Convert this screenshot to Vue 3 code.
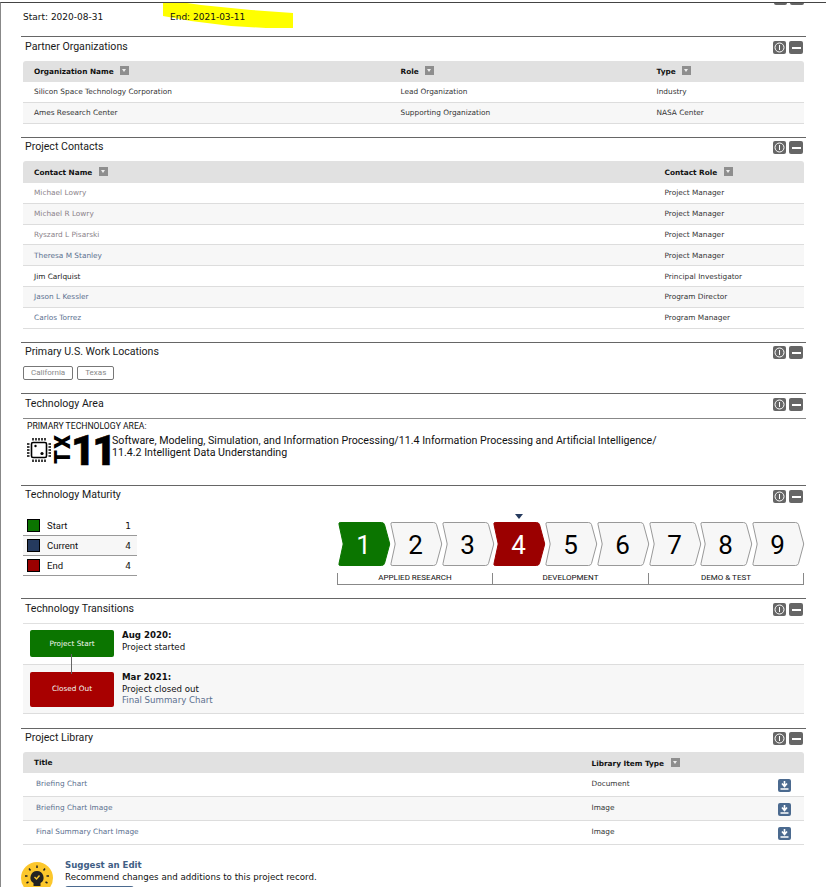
<script setup>
const partners = [
  ['Silicon Space Technology Corporation', 'Lead Organization', 'Industry'],
  ['Ames Research Center', 'Supporting Organization', 'NASA Center']
]
const contacts = [
  ['Michael Lowry', 'Project Manager', 'muted'],
  ['Michael R Lowry', 'Project Manager', 'muted'],
  ['Ryszard L Pisarski', 'Project Manager', 'muted'],
  ['Theresa M Stanley', 'Project Manager', 'link'],
  ['Jim Carlquist', 'Principal Investigator', 'plain'],
  ['Jason L Kessler', 'Program Director', 'link'],
  ['Carlos Torrez', 'Program Manager', 'link']
]
const legend = [
  ['Start', 1, '#0b7500'],
  ['Current', 4, '#253a5e'],
  ['End', 4, '#9b0000']
]
const steps = [1, 2, 3, 4, 5, 6, 7, 8, 9]
const library = [
  ['Briefing Chart', 'Document'],
  ['Briefing Chart Image', 'Image'],
  ['Final Summary Chart Image', 'Image']
]
</script>

<template>
  <div class="page">
    <svg class="marker" width="135" height="30" viewBox="0 0 135 30">
      <path d="M2 0H12L40 4 90 9 132 12V27H105L70 25 30 20 2 15Z" fill="#ffff00" />
    </svg>

    <div class="stub"><span class="btns"><i class="btn"></i><i class="btn"></i></span></div>
    <div class="dates"><span class="d1">Start: 2020-08-31</span><span>End: 2021-03-11</span></div>

    <section class="sec s1">
      <header class="sec-head">
        <h2>Partner Organizations</h2>
        <span class="btns">
          <i class="btn"><svg width="11" height="11" viewBox="0 0 11 11"><circle cx="5.5" cy="5.5" r="4.5" fill="none" stroke="#fff" /><path d="M5.5 3v5" stroke="#fff" /></svg></i>
          <i class="btn"><b class="dash"></b></i>
        </span>
      </header>
      <div class="thead cols-a">
        <span>Organization Name <i class="sort"></i></span>
        <span>Role <i class="sort"></i></span>
        <span>Type <i class="sort"></i></span>
      </div>
      <div v-for="(r, i) in partners" :key="r[0]" class="trow cols-a" :class="{ alt: i % 2 }">
        <span v-for="c in r" :key="c">{{ c }}</span>
      </div>
    </section>

    <section class="sec s2">
      <header class="sec-head tight">
        <h2>Project Contacts</h2>
        <span class="btns">
          <i class="btn"><svg width="11" height="11" viewBox="0 0 11 11"><circle cx="5.5" cy="5.5" r="4.5" fill="none" stroke="#fff" /><path d="M5.5 3v5" stroke="#fff" /></svg></i>
          <i class="btn"><b class="dash"></b></i>
        </span>
      </header>
      <div class="thead thead-b cols-b">
        <span>Contact Name <i class="sort"></i></span>
        <span>Contact Role <i class="sort"></i></span>
      </div>
      <div v-for="(r, i) in contacts" :key="r[0]" class="trow contact-row cols-b" :class="{ alt: i % 2 }">
        <span :class="r[2]">{{ r[0] }}</span><span>{{ r[1] }}</span>
      </div>
    </section>

    <section class="sec s3">
      <header class="sec-head tight">
        <h2>Primary U.S. Work Locations</h2>
        <span class="btns">
          <i class="btn"><svg width="11" height="11" viewBox="0 0 11 11"><circle cx="5.5" cy="5.5" r="4.5" fill="none" stroke="#fff" /><path d="M5.5 3v5" stroke="#fff" /></svg></i>
          <i class="btn"><b class="dash"></b></i>
        </span>
      </header>
      <div class="tags"><span class="tag">California</span><span class="tag">Texas</span></div>
    </section>

    <section class="sec s4">
      <header class="sec-head">
        <h2>Technology Area</h2>
        <span class="btns">
          <i class="btn"><svg width="11" height="11" viewBox="0 0 11 11"><circle cx="5.5" cy="5.5" r="4.5" fill="none" stroke="#fff" /><path d="M5.5 3v5" stroke="#fff" /></svg></i>
          <i class="btn"><b class="dash"></b></i>
        </span>
      </header>
      <div class="area">
        <div class="area-label">PRIMARY TECHNOLOGY AREA:</div>
        <div class="area-body">
          <svg class="chip" width="24" height="24" viewBox="0 0 24 24">
            <rect x="4.5" y="4.5" width="15" height="15" rx="1.5" fill="none" stroke="#000" stroke-width="1.6" />
            <path d="M6 0v2.5M9 0v2.5M12 0v2.5M15 0v2.5M18 0v2.5M6 21.5V24M9 21.5V24M12 21.5V24M15 21.5V24M18 21.5V24M0 6h2.5M0 9h2.5M0 12h2.5M0 15h2.5M0 18h2.5M21.5 6H24M21.5 9H24M21.5 12H24M21.5 15H24M21.5 18H24" stroke="#000" stroke-width="1.5" />
            <circle cx="8.5" cy="8" r="1.2" /><circle cx="15" cy="15.5" r="1.6" />
          </svg>
          <span class="tx">TX</span>
          <span class="eleven">11</span>
          <p class="area-text">Software, Modeling, Simulation, and Information Processing/11.4 Information Processing and Artificial Intelligence/<br />11.4.2 Intelligent Data Understanding</p>
        </div>
      </div>
    </section>

    <section class="sec s5">
      <header class="sec-head">
        <h2>Technology Maturity</h2>
        <span class="btns">
          <i class="btn"><svg width="11" height="11" viewBox="0 0 11 11"><circle cx="5.5" cy="5.5" r="4.5" fill="none" stroke="#fff" /><path d="M5.5 3v5" stroke="#fff" /></svg></i>
          <i class="btn"><b class="dash"></b></i>
        </span>
      </header>
      <div class="maturity">
        <div class="legend">
          <div v-for="(l, i) in legend" :key="l[0]" class="leg-row" :class="{ alt: i === 1 }">
            <i class="swatch" :style="{ background: l[2] }"></i>
            <span class="leg-name">{{ l[0] }}</span>
            <span class="leg-val">{{ l[1] }}</span>
          </div>
        </div>
        <div class="scale">
          <div class="steps">
            <svg v-for="n in steps" :key="n" class="step" width="52" height="44" viewBox="0 0 52 44">
              <path
                d="M2.2 .5H43.5Q45.8 .5 46.5 2.5L51.5 21Q51.8 22 51.5 23L46.5 41.5Q45.8 43.5 43.5 43.5H2.2Q.4 43.5 1 41.5L5 23Q5.3 22 5 21L1 2.5Q.4 .5 2.2 .5Z"
                :fill="n === 1 ? '#0b7500' : n === 4 ? '#9b0000' : '#f7f7f7'"
                :stroke="n === 1 ? '#0b7500' : n === 4 ? '#9b0000' : '#999'"
              />
              <text x="25.5" y="31.5" text-anchor="middle" class="step-num" :fill="n === 1 || n === 4 ? '#fff' : '#000'">{{ n }}</text>
            </svg>
            <i class="caret"></i>
          </div>
          <div class="bracket">
            <span>APPLIED RESEARCH</span><span>DEVELOPMENT</span><span>DEMO &amp; TEST</span>
          </div>
        </div>
      </div>
    </section>

    <section class="sec s6">
      <header class="sec-head">
        <h2>Technology Transitions</h2>
        <span class="btns">
          <i class="btn"><svg width="11" height="11" viewBox="0 0 11 11"><circle cx="5.5" cy="5.5" r="4.5" fill="none" stroke="#fff" /><path d="M5.5 3v5" stroke="#fff" /></svg></i>
          <i class="btn"><b class="dash"></b></i>
        </span>
      </header>
      <div class="trans">
        <i class="connector"></i>
        <div class="t-row t-first">
          <div class="t-box green">Project Start</div>
          <div class="t-text"><strong>Aug 2020:</strong><br />Project started</div>
        </div>
        <div class="t-row t-second">
          <div class="t-box red">Closed Out</div>
          <div class="t-text"><strong>Mar 2021:</strong><br />Project closed out<br /><span class="link">Final Summary Chart</span></div>
        </div>
      </div>
    </section>

    <section class="sec s7">
      <header class="sec-head tight">
        <h2>Project Library</h2>
        <span class="btns">
          <i class="btn"><svg width="11" height="11" viewBox="0 0 11 11"><circle cx="5.5" cy="5.5" r="4.5" fill="none" stroke="#fff" /><path d="M5.5 3v5" stroke="#fff" /></svg></i>
          <i class="btn"><b class="dash"></b></i>
        </span>
      </header>
      <div class="thead cols-c">
        <span>Title</span>
        <span>Library Item Type <i class="sort"></i></span>
        <span></span>
      </div>
      <div v-for="(r, i) in library" :key="r[0]" class="trow lib-row cols-c" :class="{ alt: i % 2 }">
        <span class="link lib-title">{{ r[0] }}</span><span>{{ r[1] }}</span>
        <i class="dl">
          <svg width="13" height="13" viewBox="0 0 13 13"><path d="M6.5 2v5M4 4.5l2.5 3 2.5-3M2.5 10h8" fill="none" stroke="#fff" stroke-width="1.6" /></svg>
        </i>
      </div>
    </section>

    <div class="suggest">
      <svg class="bulb" width="32" height="32" viewBox="0 0 32 32">
        <circle cx="16" cy="16" r="16" fill="#fcc72c" />
        <path d="M16 9a6.5 6.5 0 0 0-3.5 12v3h7v-3A6.5 6.5 0 0 0 16 9Z" fill="#222" />
        <path d="M13.5 15l2 2 3-3.5" fill="none" stroke="#fcc72c" stroke-width="1.4" />
        <path d="M16 3.500v2.500M8 6.500l1.500 2M24 6.500l-1.500 2M4 14h2.500M25.500 14H28M5.500 21l2-1M26.500 21l-2-1" stroke="#222" stroke-width="1.5" />
      </svg>
      <div>
        <div class="sg-title">Suggest an Edit</div>
        <div class="sg-text">Recommend changes and additions to this project record.</div>
        <div class="sg-btn"></div>
      </div>
    </div>
  </div>
</template>

<style>
html, body { margin: 0; background: #fff; }
</style>

<style scoped>
.page {
  position: relative;
  height: 885px;
  margin-top: 2px;
  border-top: 1px solid #444;
  border-left: 1px solid #888;
  overflow: hidden;
  box-sizing: border-box;
  font-family: "DejaVu Sans", sans-serif;
  font-size: 7.35px;
  color: #333;
}
.marker { position: absolute; left: 160px; top: -2px; }
.stub { height: 2px; overflow: hidden; width: 803px; position: relative; }
.stub .btns { position: absolute; right: 0; bottom: 0; margin: 0; }
.dates {
  position: relative;
  height: 31px;
  padding: 7px 0 0 22px;
  box-sizing: border-box;
  font-size: 9px;
  color: #111;
  display: flex;
}
.d1 { width: 147px; }
.sec { width: 785px; margin-left: 20px; border-top: 1px solid #666; box-sizing: border-box; }
.s1 { height: 101px; }
.s2 { height: 205px; }
.s3 { height: 51px; }
.s4 { height: 92px; }
.s5 { height: 113px; }
.s6 { height: 130px; }
.s7 { height: 125px; }
.sec-head { height: 24px; display: flex; justify-content: space-between; align-items: flex-start; padding: 0 3px 0 4px; }
.sec-head.tight { height: 23px; }
.sec-head.tight .btns { margin-top: 3px; }
h2 { margin: 2px 0 0; font: 400 10.6px/14px Roboto, sans-serif; color: #1a1a1a; }
.s1 h2, .s4 h2, .s6 h2 { margin-top: 3px; }
.btns { display: flex; gap: 3px; margin-top: 4px; }
.btn { width: 13px; height: 13px; border-radius: 2px; background: #666; display: flex; align-items: center; justify-content: center; }
.btn + .btn { width: 14px; }
.dash { width: 9px; height: 2px; background: #fff; display: block; }
.thead, .trow { margin-left: 2px; width: 781px; display: grid; box-sizing: border-box; align-items: center; }
.thead { height: 21px; background: #e1e1e1; border-radius: 3px 3px 0 0; font-weight: 700; color: #111; }
.thead-b { height: 22px; }
.s1 .thead, .s2 .thead, .s1 .trow { padding-bottom: 1px; }
.trow { height: 21px; border-bottom: 1px solid #ddd; background: #fff; }
.contact-row { height: 20.8px; }
.trow.alt { background: #f7f7f7; }
.cols-a { grid-template-columns: 366.5px 256px 1fr; padding-left: 11px; }
.cols-b { grid-template-columns: 630.5px 1fr; padding-left: 11px; }
.cols-c { grid-template-columns: 557.5px 1fr 34px; padding-left: 11px; }
.sort { display: inline-block; width: 9px; height: 9px; margin-left: 4px; background: #8e8e8e; vertical-align: -1.5px; position: relative; }
.sort::after { content: ""; position: absolute; left: 2px; top: 3px; border: 2.5px solid transparent; border-top: 3px solid #eee; border-bottom: 0; }
.muted { color: #8a7f88; }
.link { color: #5b708f; }
.plain { color: #222; }
.tags { display: flex; gap: 4px; margin-left: 2px; }
.tag { height: 12px; padding: 0 7px; border: 1px solid #777; border-radius: 2px; font: 8px/12px Roboto, sans-serif; color: #888; }
.area { margin-left: 2px; border-top: 1px solid #888; padding: 1px 0 0 4px; }
.area-label { font: 8.65px/12px Roboto, sans-serif; color: #111; }
.area-body { display: flex; align-items: flex-start; margin-top: 2px; }
.chip { flex: none; margin-top: 4px; margin-right: 4px; }
.tx { flex: none; width: 16px; height: 30px; writing-mode: vertical-rl; transform: rotate(180deg); display: flex; align-items: center; justify-content: center; font: 900 22px/16px Roboto, sans-serif; color: #000; white-space: nowrap; letter-spacing: 1px; }
.eleven { flex: none; width: 39px; margin-top: 1px; font: 900 42px/32px Roboto, sans-serif; letter-spacing: -3px; color: #000; -webkit-text-stroke: .6px #000; }
.area-text { margin: 1px 0 0 2px; font: 400 10.65px/12px Roboto, sans-serif; color: #111; white-space: nowrap; }
.maturity { display: flex; }
.legend { width: 114px; margin-left: 2px; margin-top: 6px; }
.leg-row { height: 20px; border-bottom: 1px solid #999; box-sizing: border-box; display: flex; align-items: center; padding: 0 4px; font: 9.5px Roboto, sans-serif; color: #111; }
.leg-row.alt { background: #f7f7f7; }
.swatch { width: 11px; height: 11px; border: 1px solid #000; margin-right: 7px; }
.leg-name { flex: 1; }
.leg-val { margin-right: 2px; font-family: "DejaVu Sans", sans-serif; font-size: 9px; }
.scale { width: 466px; margin-left: 201px; margin-top: 12px; }
.steps { position: relative; display: grid; grid-template-columns: repeat(9, minmax(0, 1fr)); }
.step { display: block; overflow: visible; }
.step-num { font: 400 26px Roboto, sans-serif; }
.caret { position: absolute; left: 177px; top: -8px; border: 4.5px solid transparent; border-top: 5px solid #253a5e; border-bottom: 0; }
.bracket { display: grid; grid-template-columns: 154px 156px 155px; height: 11px; width: 465px; margin: 7px 0 0 -1px; border-bottom: 1px solid #888; border-left: 1px solid #888; border-right: 1px solid #888; font: 8px/10px Roboto, sans-serif; color: #111; text-align: center; }
.bracket span + span { border-left: 1px solid #888; }
.trans { position: relative; margin-left: 2px; width: 781px; border-top: 1px solid #e0e0e0; }
.connector { position: absolute; left: 48px; top: 30px; width: 1px; height: 20px; background: #666; z-index: 1; }
.t-row { display: flex; box-sizing: border-box; border-bottom: 1px solid #ddd; }
.t-first { height: 41px; padding: 6px 0 0 7px; }
.t-second { height: 49px; padding: 7px 0 0 7px; background: #f7f7f7; }
.t-box { width: 84px; border-radius: 2px; color: #f4f8f2; text-align: center; font: 7.3px "DejaVu Sans", sans-serif; display: flex; align-items: center; justify-content: center; }
.t-first .t-box { height: 27px; }
.t-second .t-box { box-sizing: border-box; height: 35px; padding-bottom: 2px; }
.green { background: #0b7500; }
.red { background: #a80000; }
.t-text { margin-left: 8px; font: 8.65px/11.5px "DejaVu Sans", sans-serif; color: #111; }
.lib-row { height: 24px; padding-bottom: 3px; }
.lib-title { padding-left: 2px; }
.dl { width: 13px; height: 13px; margin: 4px 0 0 8px; border-radius: 2px; background: #4b6a8f; display: flex; }
.suggest { display: flex; gap: 12px; margin: 6px 0 0 20px; }
.bulb { flex: none; margin-top: 3px; }
.sg-title { font: 700 8.6px/12px "DejaVu Sans", sans-serif; color: #3f5e85; }
.sg-text { font: 8.7px/12px "DejaVu Sans", sans-serif; color: #111; }
.sg-btn { width: 69px; height: 12px; margin-top: 3px; border-radius: 3px; background: #4b6a8f; }
</style>
